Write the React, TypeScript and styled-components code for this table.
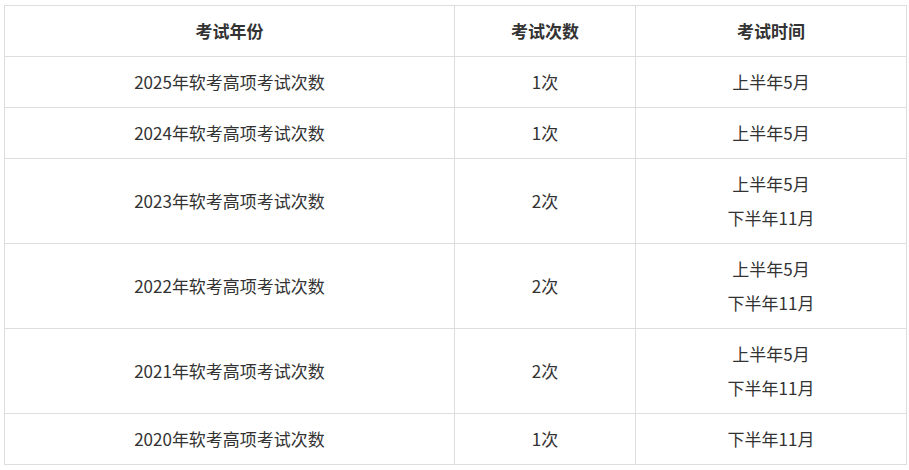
import React from 'react';
import styled, { createGlobalStyle } from 'styled-components';

const GlobalStyle = createGlobalStyle`
  html, body {
    margin: 0;
    padding: 0;
    background: #fff;
  }
  body {
    font-family: "Noto Sans CJK SC", "Noto Sans", sans-serif;
    color: #333;
  }
`;

const Page = styled.div`
  padding: 5px 4px;
`;

const Table = styled.table`
  width: 902px;
  border-collapse: collapse;
  table-layout: fixed;
  font-size: 17px;
`;

const Col = styled.col<{ $w: number }>`
  width: ${({ $w }) => $w}px;
`;

const HeadCell = styled.th`
  border: 1px solid #ddd;
  padding: 8px;
  line-height: 34px;
  font-weight: 700;
  text-align: center;
  color: #333;
`;

const Cell = styled.td`
  border: 1px solid #ddd;
  padding: 8px;
  line-height: 34px;
  text-align: center;
  vertical-align: middle;
  color: #333;
`;

const Line = styled.div`
  line-height: 34px;
`;

type Row = { year: string; count: string; times: string[] };

const rows: Row[] = [
  { year: '2025', count: '1次', times: ['上半年5月'] },
  { year: '2024', count: '1次', times: ['上半年5月'] },
  { year: '2023', count: '2次', times: ['上半年5月', '下半年11月'] },
  { year: '2022', count: '2次', times: ['上半年5月', '下半年11月'] },
  { year: '2021', count: '2次', times: ['上半年5月', '下半年11月'] },
  { year: '2020', count: '1次', times: ['下半年11月'] },
];

const App = () => {
  return (
    <Page>
      <GlobalStyle />
      <Table>
        <colgroup>
          <Col $w={450} />
          <Col $w={181} />
          <Col $w={271} />
        </colgroup>
        <thead>
          <tr>
            <HeadCell>考试年份</HeadCell>
            <HeadCell>考试次数</HeadCell>
            <HeadCell>考试时间</HeadCell>
          </tr>
        </thead>
        <tbody>
          {rows.map((r) => (
            <tr key={r.year}>
              <Cell>{r.year}年软考高项考试次数</Cell>
              <Cell>{r.count}</Cell>
              <Cell>
                {r.times.map((t) => (
                  <Line key={t}>{t}</Line>
                ))}
              </Cell>
            </tr>
          ))}
        </tbody>
      </Table>
    </Page>
  );
};

export default App;
